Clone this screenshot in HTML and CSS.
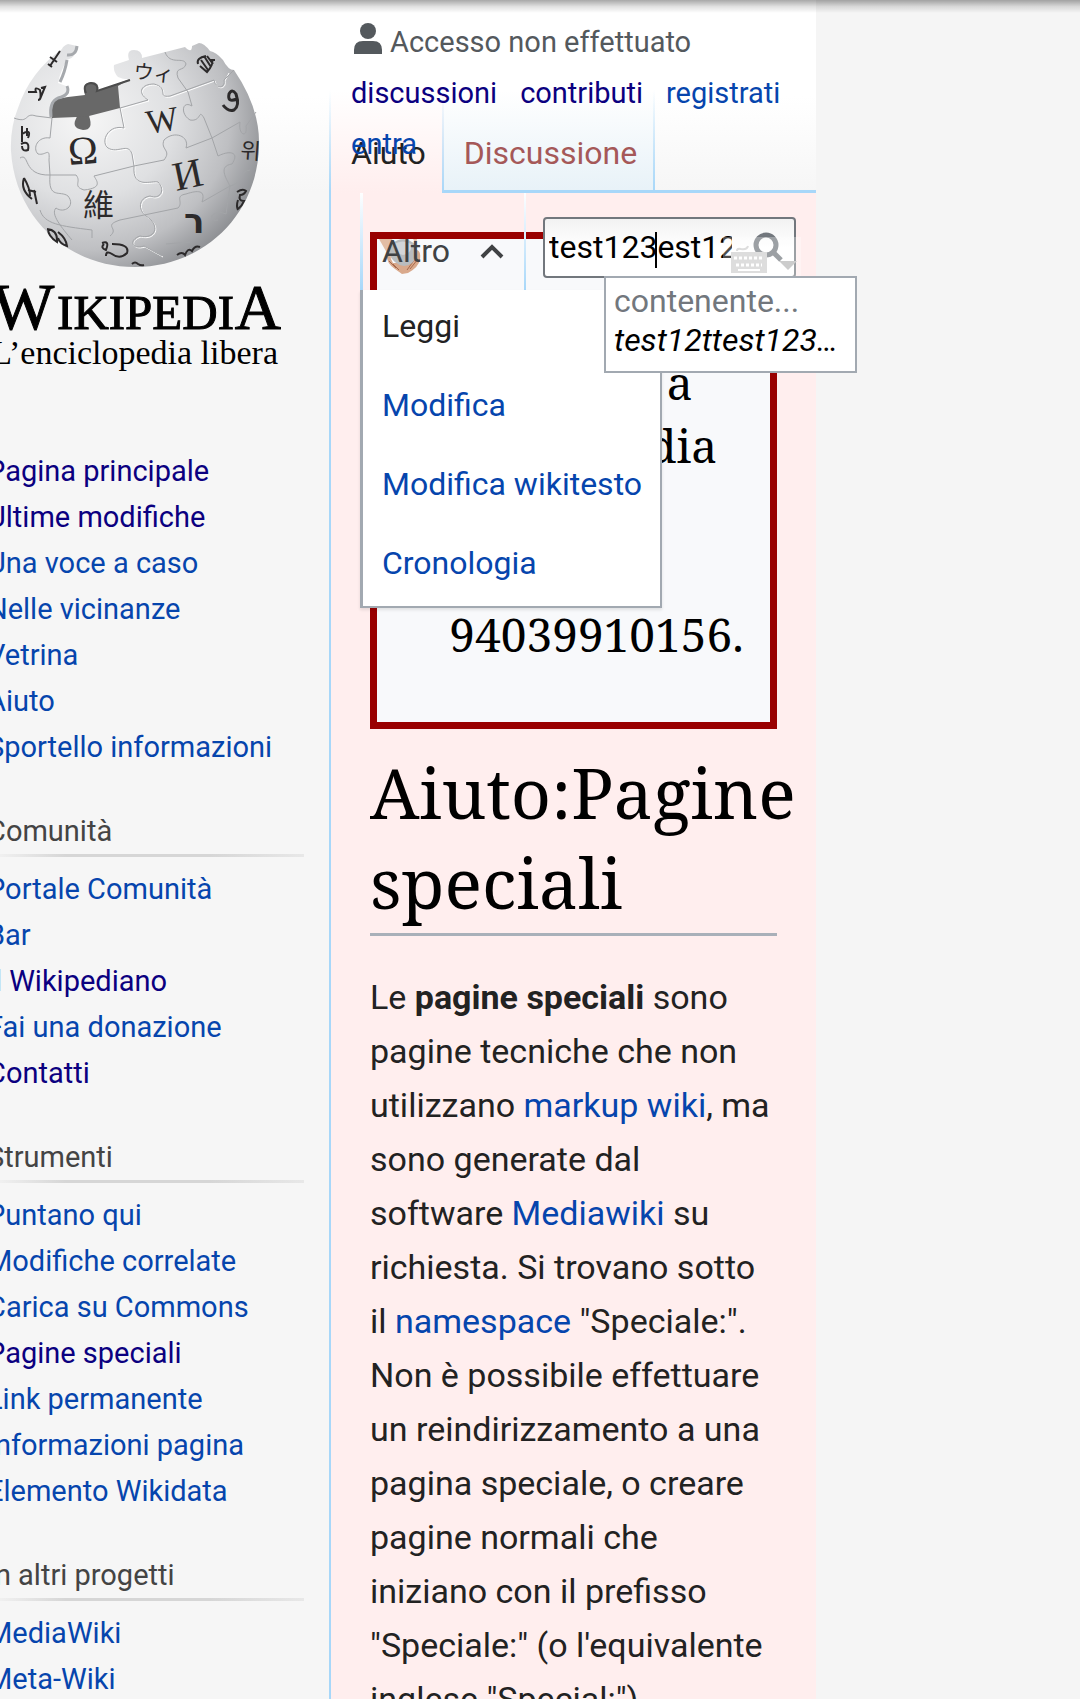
FILE: index.html
```html
<!DOCTYPE html>
<html lang="it">
<head>
<meta charset="utf-8">
<meta name="viewport" content="width=device-width, initial-scale=1">
<title>Aiuto:Pagine speciali - Wikipedia</title>
<link rel="stylesheet" href="styles.css">
</head>
<body>
<div class="page">
  <aside class="sidebar">
    <a class="logo" href="#" aria-label="Pagina principale">
      <svg viewBox="0 0 304 400" width="304" height="400">
        <defs>
          <radialGradient id="ball" cx="0.3" cy="0.34" r="0.78">
            <stop offset="0" stop-color="#f6f6f6"/>
            <stop offset="0.45" stop-color="#dfe0e2"/>
            <stop offset="0.75" stop-color="#bebfc2"/>
            <stop offset="1" stop-color="#85878b"/>
          </radialGradient>
        </defs>
        <path d="M50 100 L68 97 85 95 Q81 84 91 82 Q100 82 98 91 L130 79 122 110 84 118 50 120Z" fill="#686868"/>
        <path d="M68 44 Q63 46 62 49 Q30 72 18 108 Q10 128 11 151 C15 218 68 267 135 267 C203 267 258 215 259 145 Q260 108 234 70 Q228 70 223 60 Q216 52 210 51 Q204 43 199 43 L192 46 Q192 54 185 47 L142 58 Q142 50 134 50 Q126 50 129 60 L114 65 Q113 72 118 77 Q125 80 130 79 L118 86 120 108 89 116 Q94 130 83 130 Q70 128 77 117 L52 118 Q48 102 56 98 L66 97 Q70 90 66 86 L58 83 Q60 72 67 60 Q76 58 77 46 Z" fill="url(#ball)"/>
        <path d="M77 46 Q76 56 67 55 M67 60 Q65 72 60 82 M67 86 Q71 95 58 98 Q49 102 51 117" fill="none" stroke="#a6a9ad" stroke-width="3"/>
        <path d="M77 117 Q70 128 83 130 Q94 130 89 116" fill="#686868"/>
        <path d="M86 93 Q82 84 91 83 Q99 84 97 91 L130 80" fill="none" stroke="#4c4c4c" stroke-width="2"/>
        <g fill="none" stroke="#fff" stroke-width="1" transform="translate(1 1)">
          <path d="M120 108 L124 128 C108 124 100 142 108 148 C118 154 128 142 132 154 L134 166 C132 190 152 180 158 182 C166 190 160 200 150 196 C138 198 138 210 146 216 C162 226 154 240 140 236 C128 240 132 250 144 246 L162 256"/>
          <path d="M120 108 L148 100 C136 92 142 84 154 84 C170 88 156 98 170 96 L214 80 C216 90 226 88 224 80 L228 72"/>
        </g>
        <g fill="none" stroke="#a3a5a8" stroke-width="1">
          <path d="M120 108 L124 128 C108 124 100 142 108 148 C118 154 128 142 132 154 L134 166 C132 190 152 180 158 182 C166 190 160 200 150 196 C138 198 138 210 146 216 C162 226 154 240 140 236 C128 240 132 250 144 246 L162 256"/>
          <path d="M120 108 L148 100 C136 92 142 84 154 84 C170 88 156 98 170 96 L214 80 C216 90 226 88 224 80 L234 70"/>
          <path d="M52 118 L50 138 C38 136 32 148 38 154 C46 156 50 146 49 160 L50 175 C48 200 60 190 68 196 C76 206 64 214 56 208 C50 214 62 228 72 240"/>
          <path d="M14 118 C30 124 24 112 36 116 L52 118 M20 158 C30 152 22 176 50 175 L76 175 C82 182 72 186 84 190 C104 188 96 180 94 176 L134 166 L164 160 C172 150 160 150 164 140 C174 130 190 136 186 148 L212 138 L240 122 C238 136 248 138 246 126 L256 112"/>
          <path d="M165 52 C170 66 184 56 186 64 C184 72 174 66 178 78 L188 92 L192 106 C182 100 180 114 190 120 C202 122 198 108 204 118 L212 138 L218 156 C230 150 240 152 232 164 C218 166 226 178 230 186 L226 214"/>
          <path d="M40 210 C44 224 60 226 92 230 L92 238 M110 236 C120 228 102 226 120 220 L178 208 C184 202 174 196 186 194 C198 190 206 190 202 202 L230 186 C246 182 238 172 250 170 M226 214 C212 208 206 222 218 220 M166 244 L190 242"/>
        </g>
        <g fill="#2c2a2b" font-family="Liberation Serif, serif">
          <text x="69" y="165" font-size="40" transform="rotate(-4 69 165)">Ω</text>
          <text x="148" y="134" font-size="34" transform="rotate(-9 148 134)">W</text>
          <text x="176" y="191" font-size="41" transform="rotate(-12 176 191)">И</text>
          <text x="83" y="216" font-size="31" font-family="Noto Sans CJK TC, sans-serif">維</text>
          <text x="133" y="78" font-size="20" font-family="Noto Sans CJK JP, sans-serif" transform="rotate(6 133 78)">ウィ</text>
          <text x="184" y="233" font-size="34" font-weight="bold" font-family="DejaVu Sans, sans-serif">ר</text>
          <text x="240" y="158" font-size="22" font-family="Noto Sans CJK KR, sans-serif" transform="rotate(4 240 158)">위</text>
        </g>
        <g fill="none" stroke="#2c2a2b" stroke-width="2">
          <path d="M237 99 Q227 103 229 94 Q232 88 236 94 Q240 106 234 110 Q228 112 223 105" stroke-width="3"/>
          <path d="M237 192 q6 -4 9 -1 q-2 4 -6 4 q-2 6 4 6 q-2 5 -6 8 M238 200 q-2 6 0 10"/>
          <path d="M201 60 L208 70 M204 56 L211 67 M207 56 L213 64 M198 64 Q196 58 206 56 M200 66 L207 72 Q214 64 212 60 L215 60"/>
          <path d="M50 66 L60 51 M50 57 L57 62 M48 64 l4 3"/>
          <path d="M28 92 L36 92 Q34 86 40 90 Q42 100 38 100 M41 88 L45 87 40 99"/>
          <path d="M22 126 V142 M22 134 Q32 128 28 138 M21 144 Q30 140 28 150 Q22 152 22 146 M27 128 V136"/>
          <path d="M24 178 Q20 190 32 199 M24 178 Q30 188 30 196 M28 190 l8 2 M34 190 l3 14"/>
          <path d="M47 229 Q58 230 57 242 Q48 236 48 229 M58 232 Q66 238 67 246 Q60 244 58 238 M102 243 Q110 240 106 250 Q100 248 104 244 M112 244 Q130 244 127 253 Q120 260 112 254 Q106 250 106 256"/>
          <path d="M177 255 q5 -4 8 0 q3 -8 7 -4 q3 -6 8 -4 M132 264 q3 -3 6 0 q3 2 6 1"/>
        </g>
        <g fill="#000" font-family="Liberation Serif, serif">
          <g stroke="#000" stroke-width="1">
            <text x="-8" y="329" font-size="66">W</text>
            <text x="234" y="329" font-size="49" text-anchor="end">IKIPEDI</text>
            <text x="281" y="329" font-size="64" text-anchor="end">A</text>
          </g>
          <text x="278" y="364" font-size="34" text-anchor="end">L’enciclopedia libera</text>
        </g>
      </svg>
    </a>
    <nav class="portals">
      <section class="portal">
        <ul>
          <li><a class="visited" href="#">Pagina principale</a></li>
          <li><a class="visited" href="#">Ultime modifiche</a></li>
          <li><a href="#">Una voce a caso</a></li>
          <li><a href="#">Nelle vicinanze</a></li>
          <li><a href="#">Vetrina</a></li>
          <li><a href="#">Aiuto</a></li>
          <li><a href="#">Sportello informazioni</a></li>
        </ul>
      </section>
      <section class="portal">
        <h3>Comunità</h3>
        <ul>
          <li><a href="#">Portale Comunità</a></li>
          <li><a href="#">Bar</a></li>
          <li><a class="visited" href="#">Il Wikipediano</a></li>
          <li><a href="#">Fai una donazione</a></li>
          <li><a class="visited" href="#">Contatti</a></li>
        </ul>
      </section>
      <section class="portal">
        <h3>Strumenti</h3>
        <ul>
          <li><a href="#">Puntano qui</a></li>
          <li><a href="#">Modifiche correlate</a></li>
          <li><a href="#">Carica su Commons</a></li>
          <li><a class="visited" href="#">Pagine speciali</a></li>
          <li><a href="#">Link permanente</a></li>
          <li><a href="#">Informazioni pagina</a></li>
          <li><a href="#">Elemento Wikidata</a></li>
        </ul>
      </section>
      <section class="portal">
        <h3>In altri progetti</h3>
        <ul>
          <li><a href="#">MediaWiki</a></li>
          <li><a href="#">Meta-Wiki</a></li>
        </ul>
      </section>
    </nav>
  </aside>

  <div class="main">
    <header class="head">
      <nav class="tabs">
        <a class="tab current" href="#">Aiuto</a>
        <a class="tab missing" href="#">Discussione</a>
      </nav>
      <ul class="personal">
        <li class="anon">
          <svg viewBox="0 0 28 32" width="28" height="32" fill="#54595d"><circle cx="14" cy="9" r="8"/><path d="M0 32 V28 Q0 19 9 19 H19 Q28 19 28 28 V32Z"/></svg>
          <span>Accesso non effettuato</span>
        </li>
        <li><a class="visited" href="#">discussioni</a></li>
        <li><a class="visited" href="#">contributi</a></li>
        <li><a href="#">registrati</a></li>
        <li><a href="#">entra</a></li>
      </ul>
    </header>

    <div class="tools">
      <div class="more">
        <button class="more-label" type="button" aria-expanded="true">Altro
          <svg viewBox="0 0 24 16" width="24" height="16" fill="none" stroke="#404244" stroke-width="4"><path d="M2 14 L12 4 L22 14"/></svg>
        </button>
        <ul class="menu">
          <li><a class="selected" href="#">Leggi</a></li>
          <li><a href="#">Modifica</a></li>
          <li><a href="#">Modifica wikitesto</a></li>
          <li><a href="#">Cronologia</a></li>
        </ul>
      </div>
      <form class="search">
        <input type="text" value="test123est12ttest123" aria-label="Cerca">
        <span class="caret"></span>
        <button class="go" type="button" aria-label="Cerca">
          <svg viewBox="0 0 30 30" width="30" height="30" fill="none" stroke="#72777d"><circle cx="13" cy="13" r="10" stroke-width="5"/><path d="M20 20 L28 28" stroke-width="5"/></svg>
        </button>
        <svg class="keyboard" viewBox="0 0 78 39" width="78" height="39">
          <rect width="78" height="39" fill="#fff" fill-opacity="0.3"/>
          <path d="M14 14 Q14 11 18 12 Q24 13 25 9" fill="none" stroke="#ddd" stroke-width="2"/>
          <rect x="8" y="15" width="36" height="21" fill="#ddd"/>
          <path d="M11 21 H41 M13 28 H39" stroke="#fff" stroke-width="3" stroke-dasharray="3 2"/>
          <path d="M15 33 H37" stroke="#fff" stroke-width="2"/>
          <path d="M56 24 H74 L65 33Z" fill="#ccc"/>
        </svg>
        <div class="suggest">
          <span class="hint">contenente...</span>
          <span class="query">test12ttest123…</span>
        </div>
      </form>
    </div>

    <main class="content">
      <div class="notice">
        <svg viewBox="0 0 44 36" width="44" height="36">
          <path d="M0 0 H13 L18 10 12 20 8 14Z" fill="#e3bda5"/>
          <path d="M34 0 H38 L37 5Z" fill="#e3bda5"/>
          <path d="M8 12 Q6 24 16 30 L23 35 L29 34 Q40 28 41 20 Q42 12 38 11 L34 24 H14Z" fill="#d9a98c"/>
          <path d="M10 22 L17 29 M14 25 L20 31 M39 20 L31 30 M36 20 L28 31" stroke="#a8694c" stroke-width="1"/>
          <path d="M13 5 Q18 0 25 0 Q36 1 38 12 Q37 26 25 27 Q13 25 11 14Z" fill="#b9bcbf"/>
          <path d="M15 5 Q24 0 32 5 Q34 14 24 16 Q14 14 15 5Z" fill="#d3d5d8"/>
        </svg>
        <p>Dona il<br>5×1000 a<br>Wikimedia<br>Italia<br>scrivi<br>94039910156.</p>
      </div>
      <h1>Aiuto:Pagine speciali</h1>
      <p class="text">Le <b>pagine speciali</b> sono pagine tecniche che non utilizzano <a href="#">markup wiki</a>, ma sono generate dal software <a href="#">Mediawiki</a> su richiesta. Si trovano sotto il <a href="#">namespace</a> "Speciale:". Non è possibile effettuare un reindirizzamento a una pagina speciale, o creare pagine normali che iniziano con il prefisso "Speciale:" (o l'equivalente inglese "Special:").</p>
    </main>
  </div>
</div>
</body>
</html>
```

FILE: styles.css
```css
* { box-sizing: border-box; }
body {
  margin: 0;
  height: 100vh;
  overflow: hidden;
  background: #f5f5f5;
  color: #222;
  font-family: Roboto, "Liberation Sans", sans-serif;
  font-size: 32px;
}
body::before {
  content: "";
  position: absolute;
  z-index: 9;
  top: 0;
  left: 0;
  right: 0;
  height: 13px;
  background: linear-gradient(rgba(0,0,0,.34), rgba(0,0,0,.12) 50%, transparent);
}
a { color: #0645ad; text-decoration: none; }
a.visited { color: #0b0080; }
ul { margin: 0; padding: 0; list-style: none; }

.page {
  display: grid;
  grid-template-columns: 329px minmax(0, 1fr);
  margin-right: 264px;
  min-height: 100vh;
  background: linear-gradient(#fff 96px, #f6f6f6 192px);
}

.sidebar { overflow: hidden; padding-right: 25px; }
.logo { display: block; height: 448px; }
.logo svg { display: block; }
.portals {
  display: flex;
  flex-direction: column;
  gap: 38px;
  margin-left: -13px;
  font-size: 29px;
  line-height: 46px;
}
.portal h3 {
  margin: 0 0 9px;
  border-bottom: 3px solid;
  border-image: linear-gradient(to right, transparent, #d6d6d6 25%, #d6d6d6 70%, #e8e8e8) 1;
  color: #444;
  font: inherit;
}

.main { position: relative; }
.head { position: relative; height: 193px; }
.tabs {
  display: flex;
  height: 193px;
  padding-top: 90px;
  background: linear-gradient(#a7d7f9, #a7d7f9) 0 100% / 100% 3px no-repeat;
}
.tabs::before, .tab::after {
  content: "";
  width: 2px;
  background: linear-gradient(rgba(167,215,249,0), #a7d7f9);
}
.tab { display: flex; font-size: 32px; line-height: 126px; }
.tab::after { margin-left: 16px; }
.tab.current { padding-left: 20px; color: #222; background: linear-gradient(#fff, #fee); }
.tab.missing {
  padding-left: 20px;
  color: #a55858;
  background: linear-gradient(#fff, #e8f2f8);
  background-size: 100% 100px;
  background-repeat: no-repeat;
}
.personal {
  position: absolute;
  top: 17px;
  left: 22px;
  right: 0;
  display: flex;
  flex-wrap: wrap;
  column-gap: 23px;
  font-size: 29px;
  line-height: 51px;
}
.anon { display: flex; align-items: center; gap: 8px; width: 100%; padding-left: 3px; color: #54595d; }
.anon svg { margin-bottom: 10px; }

.tools {
  position: absolute;
  z-index: 2;
  top: 193px;
  left: 31px;
  right: 20px;
  display: flex;
  justify-content: space-between;
}
.more { position: relative; width: 166px; }
.more-label {
  display: flex;
  align-items: center;
  justify-content: space-between;
  width: 100%;
  height: 97px;
  padding: 18px 20px 0 19px;
  border: 0;
  border-left: 3px solid;
  border-right: 2px solid;
  border-image: linear-gradient(#fff, #a7d7f9) 1;
  background: none;
  color: #404244;
  font: 32px/60px Roboto, "Liberation Sans", sans-serif;
}
.menu {
  position: absolute;
  top: 97px;
  left: 0;
  border: 2px solid #a2a9b1;
  border-width: 0 2px 2px 3px;
  background: #fff;
  box-shadow: 0 2px 3px rgba(0,0,0,.1);
  font-size: 32px;
  line-height: 73px;
  white-space: nowrap;
}
.menu a { display: block; padding: 0 18px 6px 19px; }
.menu a.selected { color: #222; }

.search {
  position: relative;
  display: flex;
  width: 253px;
  height: 61px;
  margin-top: 24px;
  padding-left: 4px;
  border: 2px solid #72777d;
  border-radius: 4px;
  background: linear-gradient(#f2f2f2, #fff 50%);
}
.search input {
  width: 183px;
  padding: 0;
  border: 0;
  background: none;
  color: #000;
  font: 32px/59px Roboto, "Liberation Sans", sans-serif;
}
.caret { position: absolute; top: 13px; left: 110px; width: 2px; height: 36px; background: #000; }
.go { margin: 0; padding: 0 0 2px 21px; border: 0; background: none; }
.go svg { display: block; }
.keyboard { position: absolute; top: 18px; left: 178px; }
.suggest {
  position: absolute;
  top: 57px;
  left: 59px;
  width: 253px;
  height: 97px;
  padding: 4px 8px;
  border: 2px solid #a2a9b1;
  background: #fff;
  font-size: 32px;
  line-height: 39px;
  white-space: nowrap;
}
.suggest span { display: block; }
.suggest .hint { color: #72777d; }
.suggest .query { color: #000; font-style: italic; }

.content {
  min-height: calc(100vh - 193px);
  padding: 39px 39px 0;
  border-left: 2px solid #a7d7f9;
  background: #fee;
}
.notice {
  position: relative;
  height: 497px;
  padding: 49px 0 0 46px;
  border: 7px solid #900;
  background: #f8f9fb;
  color: #000;
}
.notice svg { position: absolute; top: 0; left: 2px; }
.notice p {
  margin: 0;
  font-family: "Noto Serif", "DejaVu Serif", serif;
  font-size: 46px;
  line-height: 63px;
  text-align: center;
}
h1 {
  margin: 18px 0 34px;
  padding-bottom: 6px;
  border-bottom: 3px solid #a9b0b9;
  color: #000;
  font: 400 70px/90px "Noto Serif", "DejaVu Serif", serif;
}
.text { margin: 0; font-size: 34px; line-height: 54px; }
```
